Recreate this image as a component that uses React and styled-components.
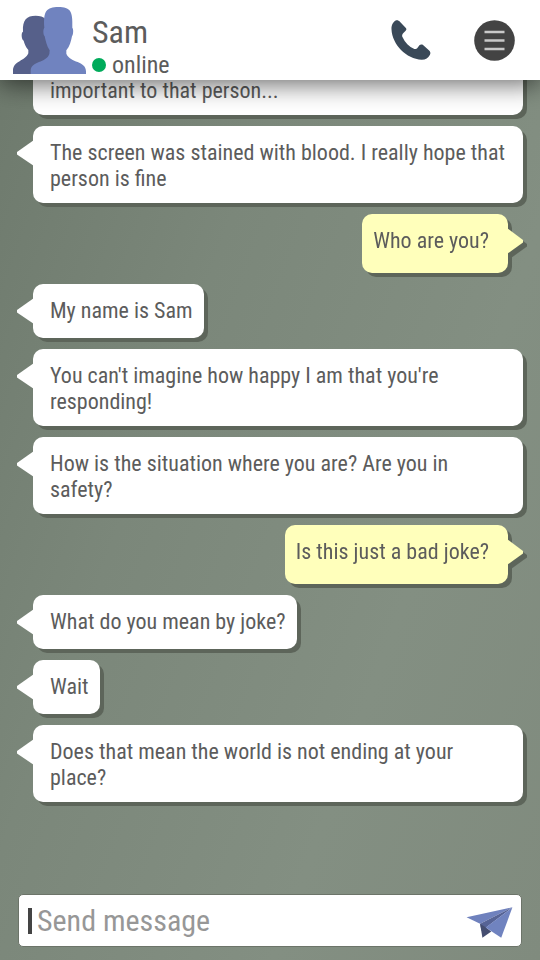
import styled, { createGlobalStyle } from 'styled-components'

const GlobalStyle = createGlobalStyle`
  * {
    box-sizing: border-box;
  }
  body {
    margin: 0;
    font-family: 'Roboto Condensed', 'Noto Sans CJK SC', sans-serif;
    color: #5c5c5c;
  }
  button, input {
    font: inherit;
  }
`

const ChatWrapper = styled.div`
  display: flex;
  flex-direction: column;
  height: 100vh;
  overflow: hidden;
  background: linear-gradient(110deg, #6d796c 0%, #7b877a 35%, #838f82 70%, #808b7e 100%);
`

const Header = styled.header`
  position: relative;
  z-index: 1;
  display: flex;
  align-items: center;
  height: 80px;
  flex-shrink: 0;
  padding: 0 25px 0 13px;
  background-color: #ffffff;
  box-shadow: 0 4px 24px rgba(0, 0, 0, 0.6);
`

const Contact = styled.div`
  flex: 1;
  padding: 14px 0 0 6px;
`

const Name = styled.h1`
  margin: 0;
  font-size: 32px;
  font-weight: normal;
  line-height: 36px;
`

const Status = styled.div`
  display: flex;
  align-items: center;
  gap: 6px;
  font-size: 24px;
  line-height: 30px;
`

const StatusDot = styled.span`
  width: 14px;
  height: 14px;
  border-radius: 50%;
  background-color: #00ab5b;
`

const IconButton = styled.button`
  display: flex;
  padding: 0;
  border: none;
  background: none;
  cursor: pointer;
`

const HeaderActions = styled.div`
  display: flex;
  align-items: center;
  gap: 43px;
`

const MessageList = styled.main`
  display: flex;
  flex: 1;
  flex-direction: column;
  justify-content: flex-end;
  gap: 11px;
  min-height: 0;
  padding: 0 17px 92px 33px;
`

const Bubble = styled.div`
  position: relative;
  flex-shrink: 0;
  border-radius: 10px;
  font-size: 22px;
  line-height: 26px;
`

const Received = styled(Bubble)`
  align-self: ${props => props.$wide ? 'stretch' : 'flex-start'};
  min-height: ${props => props.$continued ? '0' : '54px'};
  padding: 14px 11px 11px 17px;
  background-color: #ffffff;
  box-shadow: 4px 4px 0 #5d655a;
  &::before {
    content: '';
    display: ${props => props.$continued ? 'none' : 'block'};
    position: absolute;
    top: 14px;
    left: -16px;
    width: 17px;
    height: 26px;
    background-color: inherit;
    clip-path: polygon(100% 0, 100% 100%, 0 56%, 0 46%);
  }
`

const Sent = styled(Bubble)`
  align-self: flex-end;
  min-height: 59px;
  margin-right: 15px;
  padding: 14px 19px 11px 11px;
  background-color: #ffffbb;
  filter: drop-shadow(4px 4px 0 #5d655a);
  &::after {
    content: '';
    position: absolute;
    top: 14px;
    right: -15px;
    width: 16px;
    height: 26px;
    background-color: inherit;
    clip-path: polygon(0 0, 100% 46%, 100% 56%, 0 100%);
  }
`

const Composer = styled.form`
  display: flex;
  align-items: center;
  flex-shrink: 0;
  height: 53px;
  margin: 0 18px 13px;
  padding: 0 8px 0 9px;
  border: 1px solid #6c7469;
  border-radius: 5px;
  background-color: #ffffff;
`

const Caret = styled.span`
  width: 4px;
  height: 26px;
  background-color: #444444;
`

const MessageInput = styled.input`
  flex: 1;
  min-width: 0;
  padding: 0 5px;
  border: none;
  outline: none;
  background: none;
  color: #5c5c5c;
  font-size: 30px;
  line-height: 40px;
  &::placeholder {
    color: #979797;
    opacity: 1;
  }
`

const messages = [
  { text: 'important to that person...', wide: true, continued: true },
  { text: 'The screen was stained with blood. I really hope that person is fine', wide: true },
  { text: 'Who are you?', sent: true },
  { text: 'My name is Sam' },
  { text: "You can't imagine how happy I am that you're responding!", wide: true },
  { text: 'How is the situation where you are? Are you in safety?', wide: true },
  { text: 'Is this just a bad joke?', sent: true },
  { text: 'What do you mean by joke?' },
  { text: 'Wait' },
  { text: 'Does that mean the world is not ending at your place?', wide: true },
]

function AvatarIcon() {
  return (
    <svg width="73" height="68" viewBox="39 19 219 204" aria-hidden="true">
      <path fill="#56608a" d="M39 223V213C39 184 77 184 85 161L85 151C76 141 73 130 71 123C64 119 63 98 69 96C67 60 80 48 107 48C120 48 130 51 136 58L156 150L150 223Z" />
      <path fill="#7083bf" d="M92 223V213C93 184 139 190 148 163L149 152C140 140 137 123 134 110C129 104 129 88 133 84C129 34 140 22 175 22C211 22 219 34 217 84C221 88 220 104 216 110C213 125 209 141 199 152L199 162C211 191 258 182 258 215V223Z" />
    </svg>
  )
}

function PhoneIcon() {
  return (
    <svg width="40" height="40" viewBox="65 60 118 119" aria-hidden="true">
      <path fill="#3a4958" d="M66 88C65 75 72 64 80 61C84 60 88 62 91 65L108 83C111 86 111 89 108 92L100 100C97 104 97 108 99 111C106 127 118 139 134 146C138 147 141 145 143 143L149 135C152 132 156 132 159 134L178 151C182 155 183 160 180 164C175 173 168 178 156 178C110 176 68 132 66 88Z" />
    </svg>
  )
}

function MenuIcon() {
  return (
    <svg width="41" height="41" viewBox="0 0 41 41" aria-hidden="true">
      <circle cx="20.5" cy="20.5" r="20.3" fill="#434343" />
      <path d="M10.5 12H30.5M10.5 20.5H30.5M10.5 29H30.5" stroke="#c9c9c9" strokeWidth="2.6" />
    </svg>
  )
}

function SendIcon() {
  return (
    <svg width="47" height="34" viewBox="108 101 141 103" aria-hidden="true">
      <path fill="#6f81bd" d="M248 111L109 141L150 161Z" />
      <path fill="#566395" d="M248 111L150 161L154 182L168 172Z" />
      <path fill="#454e70" d="M150 161L157 203L184 184L168 172Z" />
      <path fill="#7083bf" d="M248 111L167 172L214 203Z" />
    </svg>
  )
}

function App() {
  return (
    <>
      <GlobalStyle />
      <ChatWrapper>
        <Header>
          <AvatarIcon />
          <Contact>
            <Name>Sam</Name>
            <Status><StatusDot />online</Status>
          </Contact>
          <HeaderActions>
            <IconButton type="button" aria-label="Call"><PhoneIcon /></IconButton>
            <IconButton type="button" aria-label="Menu"><MenuIcon /></IconButton>
          </HeaderActions>
        </Header>
        <MessageList>
          {messages.map(message => message.sent
            ? <Sent key={message.text}>{message.text}</Sent>
            : (
              <Received key={message.text} $wide={message.wide} $continued={message.continued}>
                {message.text}
              </Received>
            )
          )}
        </MessageList>
        <Composer onSubmit={e => e.preventDefault()}>
          <Caret />
          <MessageInput type="text" aria-label="Message" placeholder="Send message" />
          <IconButton type="submit" aria-label="Send"><SendIcon /></IconButton>
        </Composer>
      </ChatWrapper>
    </>
  )
}

export default App
